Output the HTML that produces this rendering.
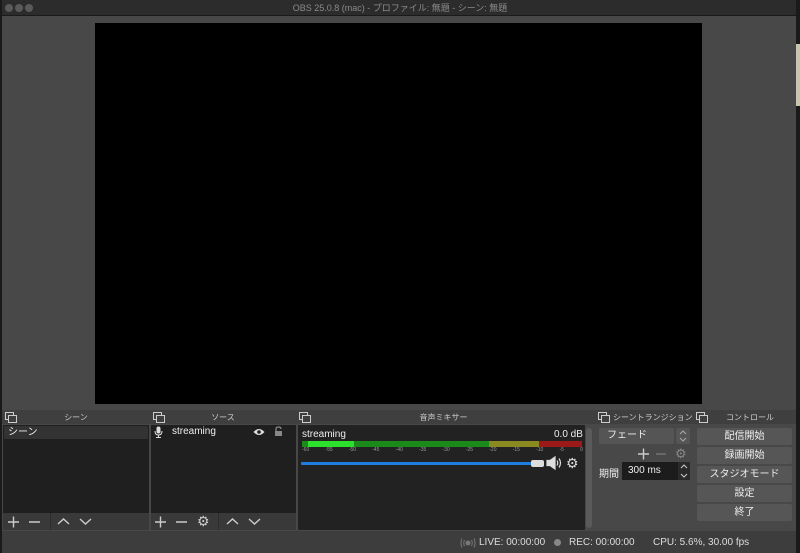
<!DOCTYPE html>
<html><head><meta charset="utf-8"><style>
*{margin:0;padding:0;box-sizing:border-box}
body{width:800px;height:553px;background:#1a1a1a;position:relative;overflow:hidden;font-family:"Liberation Sans","Noto Sans CJK JP",sans-serif;color:#ddd}
.a{position:absolute}
.hdr{font-size:8px;color:#ccc;text-align:center;line-height:12px}
.ic{position:absolute;width:10px;height:9px}
.ic:before{content:"";position:absolute;left:0;top:0;width:7px;height:6px;border:1px solid #ccc}
.ic:after{content:"";position:absolute;left:3px;top:3px;width:7px;height:6px;border:1px solid #ccc;background:#3f3f3f}
.btn{position:absolute;left:697px;width:95px;height:17px;background:#565656;border-radius:2px;font-size:10px;text-align:center;line-height:17px;color:#eee}
svg{position:absolute}
</style></head><body>
<div class="a" style="left:2px;top:0;width:794px;height:553px;background:#484848"></div>
<div class="a" style="left:2px;top:0;width:794px;height:16px;background:#2c2c2c;border-bottom:1px solid #1a1a1a"></div>
<div class="a" style="left:5px;top:4px;width:8px;height:8px;border-radius:50%;background:#5a5a5a"></div>
<div class="a" style="left:15px;top:4px;width:8px;height:8px;border-radius:50%;background:#5a5a5a"></div>
<div class="a" style="left:25px;top:4px;width:8px;height:8px;border-radius:50%;background:#5a5a5a"></div>
<div class="a" style="left:0;top:2px;width:800px;text-align:center;font-size:9px;color:#8a8a8a;line-height:12px">OBS 25.0.8 (mac) - プロファイル: 無題 - シーン: 無題</div>
<div class="a" style="left:796px;top:44px;width:4px;height:62px;background:#c8c6b0"></div>
<div class="a" style="left:95px;top:23px;width:607px;height:381px;background:#000"></div>

<div class="a" style="left:2px;top:410px;width:794px;height:14px;background:#3f3f3f"></div>
<div class="ic" style="left:5px;top:412px"></div><div class="a hdr" style="left:3px;top:412px;width:146px">シーン</div>
<div class="ic" style="left:153px;top:412px"></div><div class="a hdr" style="left:150px;top:412px;width:146px">ソース</div>
<div class="ic" style="left:299px;top:412px"></div><div class="a hdr" style="left:297px;top:412px;width:293px">音声ミキサー</div>
<div class="ic" style="left:598px;top:412px"></div><div class="a hdr" style="left:613px;top:412px;text-align:left">シーントランジション</div>
<div class="ic" style="left:696px;top:412px"></div><div class="a hdr" style="left:706px;top:412px;width:88px">コントロール</div>

<!-- scenes -->
<div class="a" style="left:3px;top:425px;width:146px;height:88px;background:#1f1f1f"></div>
<div class="a" style="left:4px;top:426px;width:144px;height:13px;background:#333;font-size:10px;line-height:13px;padding-left:4px;color:#eee">シーン</div>
<div class="a" style="left:3px;top:513px;width:146px;height:17px;background:#393939"></div>
<div class="a" style="left:50px;top:513px;width:1px;height:17px;border-left:1px dotted #222"></div>
<svg style="left:7px;top:516px" width="60" height="12" stroke="#ccc" stroke-width="1.4" fill="none"><path d="M1 6H12M6.5 0.5V11.5M22 6H33"/></svg>
<svg style="left:57px;top:516px" width="40" height="12" stroke="#ccc" stroke-width="1.4" fill="none"><path d="M1 8L6.5 3L12 8M23 3L28.5 8L34 3"/></svg>

<!-- sources -->
<div class="a" style="left:151px;top:425px;width:145px;height:88px;background:#1f1f1f"></div>
<svg style="left:154px;top:426px" width="9" height="12"><rect x="2.5" y="0.5" width="4" height="7" rx="2" fill="#ddd"/><path d="M1 5 Q1 9 4.5 9 Q8 9 8 5 M4.5 9 V11.5 M2 11.5H7" stroke="#ddd" fill="none"/></svg>
<div class="a" style="left:172px;top:426px;font-size:10px;color:#eee">streaming</div>
<svg style="left:253px;top:428px" width="12" height="8"><path d="M0.5 4Q6 -2 11.5 4Q6 10 0.5 4Z" fill="#ddd"/><circle cx="6" cy="4" r="1.8" fill="#1f1f1f"/></svg>
<svg style="left:274px;top:426px" width="9" height="11"><path d="M2 5V3Q2 1 4.5 1Q7 1 7 3" stroke="#888" fill="none" stroke-width="1.3"/><rect x="1" y="5" width="7" height="5" fill="#888"/></svg>
<div class="a" style="left:151px;top:513px;width:145px;height:17px;background:#393939"></div>
<div class="a" style="left:218px;top:513px;width:1px;height:17px;border-left:1px dotted #222"></div>
<svg style="left:154px;top:516px" width="40" height="12" stroke="#ccc" stroke-width="1.4" fill="none"><path d="M1 6H12M6.5 0.5V11.5M22 6H33"/></svg>
<div class="a" style="left:197px;top:513px;font-size:14px;line-height:17px;color:#ccc">⚙</div>
<svg style="left:226px;top:516px" width="40" height="12" stroke="#ccc" stroke-width="1.4" fill="none"><path d="M1 8L6.5 3L12 8M23 3L28.5 8L34 3"/></svg>

<!-- mixer -->
<div class="a" style="left:298px;top:425px;width:287px;height:105px;background:#222"></div>
<div class="a" style="left:586px;top:428px;width:6px;height:100px;background:#5a5a5a;border-radius:3px"></div>
<div class="a" style="left:302px;top:429px;font-size:10px;color:#eee">streaming</div>
<div class="a" style="left:554px;top:429px;font-size:10px;color:#eee">0.0 dB</div>
<div class="a" style="left:302px;top:441px;width:187px;height:6px;background:#1a8a1a"></div>
<div class="a" style="left:308px;top:441px;width:46px;height:6px;background:#2ee02e"></div>
<div class="a" style="left:489px;top:441px;width:50px;height:6px;background:#8a8a20"></div>
<div class="a" style="left:539px;top:441px;width:43px;height:6px;background:#9a1a1a"></div>
<div class="a" style="left:300px;top:447px;width:285px;font-size:5px;color:#999;display:flex;justify-content:space-between;padding:0 2px">
<span>-60</span><span>-55</span><span>-50</span><span>-45</span><span>-40</span><span>-35</span><span>-30</span><span>-25</span><span>-20</span><span>-15</span><span>-10</span><span>-5</span><span>0</span></div>
<div class="a" style="left:301px;top:462px;width:232px;height:3px;background:#1e7ee0;border-radius:1px"></div>
<div class="a" style="left:531px;top:460px;width:13px;height:7px;background:#ddd;border-radius:2px"></div>
<svg style="left:546px;top:456px" width="18" height="14" fill="none" stroke="#ddd" stroke-width="1.2"><path d="M1 4.5H4L9 1V13L4 9.5H1Z" fill="#ddd"/><path d="M11 4.5Q12.5 7 11 9.5M13 2.5Q16 7 13 11.5"/></svg>
<div class="a" style="left:566px;top:455px;font-size:14px;color:#ddd">⚙</div>

<!-- transitions -->
<div class="a" style="left:599px;top:428px;width:75px;height:16px;background:#555;border-radius:2px;font-size:10px;line-height:16px;padding-left:8px;color:#eee">フェード</div>
<div class="a" style="left:676px;top:428px;width:14px;height:16px;background:#555;border-radius:2px"></div>
<svg style="left:679px;top:430px" width="8" height="12" stroke="#aaa" fill="none"><path d="M1 4L4 1L7 4M1 8L4 11L7 8"/></svg>
<svg style="left:637px;top:448px" width="30" height="12" stroke-width="1.4" fill="none"><path d="M1 6H12M6.5 0.5V11.5" stroke="#ccc"/><path d="M19 6H29" stroke="#777"/></svg>
<div class="a" style="left:675px;top:446px;font-size:13px;color:#888">⚙</div>
<div class="a" style="left:599px;top:465px;font-size:10px;color:#eee">期間</div>
<div class="a" style="left:622px;top:462px;width:56px;height:18px;background:#1c1c1c;font-size:10px;line-height:18px;padding-left:6px;color:#eee">300 ms</div>
<div class="a" style="left:678px;top:462px;width:12px;height:18px;background:#2a2a2a"></div>
<svg style="left:680px;top:463px" width="8" height="16" stroke="#ccc" fill="none"><path d="M1 5L4 2L7 5M1 11L4 14L7 11"/></svg>

<!-- controls -->
<div class="btn" style="top:428px">配信開始</div>
<div class="btn" style="top:447px">録画開始</div>
<div class="btn" style="top:466px">スタジオモード</div>
<div class="btn" style="top:485px">設定</div>
<div class="btn" style="top:504px">終了</div>

<!-- status -->
<div class="a" style="left:2px;top:531px;width:794px;height:22px;background:#3d3d3d"></div>
<svg style="left:460px;top:538px" width="16" height="10" fill="none" stroke="#777"><circle cx="8" cy="5" r="2" fill="#777"/><path d="M4.5 2Q3 5 4.5 8M11.5 2Q13 5 11.5 8M2 0.5Q0 5 2 9.5M14 0.5Q16 5 14 9.5"/></svg>
<div class="a" style="left:479px;top:537px;font-size:10px;color:#ddd">LIVE: 00:00:00</div>
<div class="a" style="left:554px;top:539px;width:7px;height:7px;border-radius:50%;background:#888"></div>
<div class="a" style="left:569px;top:537px;font-size:10px;color:#ddd">REC: 00:00:00</div>
<div class="a" style="left:653px;top:537px;font-size:10px;color:#ddd">CPU: 5.6%, 30.00 fps</div>
</body></html>
